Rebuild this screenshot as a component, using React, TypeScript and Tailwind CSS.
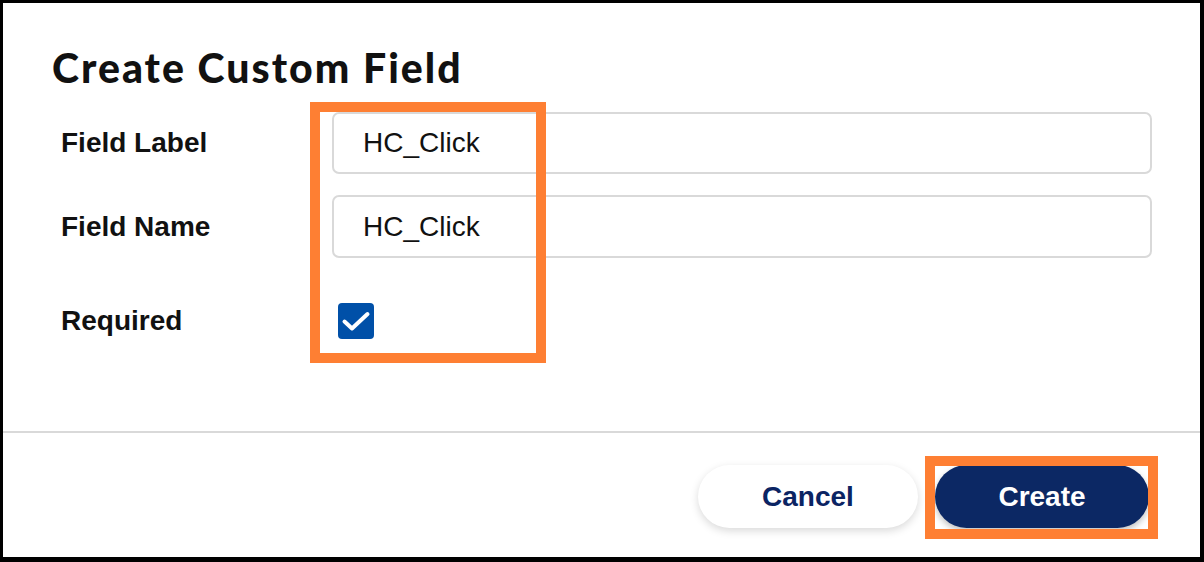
import React from "react";

const sans = { fontFamily: "'Liberation Sans', Arial, sans-serif" };

export default function App() {
  return (
    <div className="relative w-[1204px] h-[562px] bg-white border-t-[3px] border-l-[3px] border-r-[4px] border-b-[5px] border-black flex flex-col">
      <div className="pl-[49px] pt-[42px]">
        <h1 className="text-[41px] leading-[46px] font-black text-[#111] tracking-[2px]" style={{ fontFamily: "Lato, 'Noto Sans', sans-serif" }}>
          Create Custom Field
        </h1>
      </div>

      <div className="pl-[58px] pr-[48px] pt-[21px] flex flex-col" style={sans}>
        <div className="flex items-center h-[62px]">
          <div className="w-[271px] text-[28px] font-bold text-[#111]">Field Label</div>
          <div className="flex-1 h-[62px] rounded-[7px] border-[2px] border-[#d9d9d9] flex items-center pl-[29px] text-[28px] text-[#111]">
            HC_Click
          </div>
        </div>
        <div className="flex items-center h-[63px] mt-[21px]">
          <div className="w-[271px] text-[28px] font-bold text-[#111]">Field Name</div>
          <div className="flex-1 h-[63px] rounded-[7px] border-[2px] border-[#d9d9d9] flex items-center pl-[29px] text-[28px] text-[#111]">
            HC_Click
          </div>
        </div>
        <div className="flex items-center h-[36px] mt-[45px]">
          <div className="w-[277px] text-[28px] font-bold text-[#111]">Required</div>
          <div className="w-[36px] h-[36px] rounded-[4px] bg-[#0050a8] flex items-center justify-center">
            <svg width="36" height="36" viewBox="0 0 36 36" fill="none" stroke="white" strokeWidth="4" strokeLinecap="round" strokeLinejoin="round">
              <polyline points="6.5 18.5 14 25.5 29.5 11" />
            </svg>
          </div>
        </div>
      </div>

      <div className="mt-[92px] h-[2px] bg-[#d9d9d9]" />

      <div className="flex justify-end items-center gap-[17px] pr-[51px] pt-[32px]" style={sans}>
        <button className="w-[220px] h-[63px] rounded-full bg-white text-[#0b2463] text-[28px] font-bold shadow-[0_3px_8px_rgba(0,0,0,0.15)]">
          Cancel
        </button>
        <button className="w-[214px] h-[63px] rounded-full bg-[#0c2864] text-white text-[28px] font-bold shadow-[0_3px_6px_rgba(0,0,0,0.25)]">
          Create
        </button>
      </div>

      <div className="absolute left-[307px] top-[99px] w-[236px] h-[261px] border-[10px] border-[#fe7f33] pointer-events-none" />
      <div className="absolute left-[922px] top-[453px] w-[233px] h-[83px] border-[10px] border-[#fe7f33] pointer-events-none" />
    </div>
  );
}
